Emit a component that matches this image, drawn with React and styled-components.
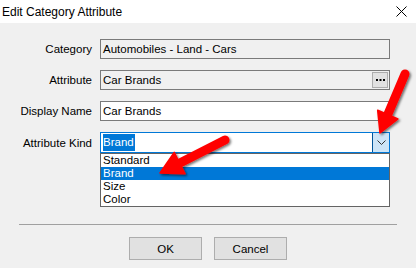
import * as React from "react"
import styled, { createGlobalStyle } from "styled-components"

const GlobalStyle = createGlobalStyle`
    html, body {
        margin: 0;
        padding: 0;
        background: #f0f0f0;
    }
    body {
        font-family: "Liberation Sans", Arial, sans-serif;
        font-size: 11.5px;
        color: #000;
    }
`

const Window = styled.div`
    position: relative;
    width: 416px;
    height: 268px;
    background: #f0f0f0;
    overflow: hidden;
`

const TitleBar = styled.div`
    height: 23px;
    background: #fff;
    display: flex;
    align-items: center;
    justify-content: space-between;
    padding: 0 8px 0 2px;
    font-size: 12px;
`

const CloseIcon = styled.svg`
    width: 11px;
    height: 11px;
    margin-right: 1px;
`

const Form = styled.div`
    display: grid;
    grid-template-columns: 92px 290px;
    column-gap: 8px;
    row-gap: 11px;
    padding-top: 16px;
    align-items: center;
`

const Label = styled.div`
    text-align: right;
    white-space: nowrap;
    line-height: 14px;
`

const Field = styled.div`
    position: relative;
    height: ${p => (p.$focus ? 21 : 20)}px;
    box-sizing: border-box;
    border: 1px solid ${p => (p.$focus ? "#0078d7" : "#7a7a7a")};
    background: ${p => (p.$readOnly ? "#f0f0f0" : "#fff")};
    display: flex;
    align-items: center;
    padding-left: 2px;
`

const FieldText = styled.span`
    flex: 1;
    line-height: 16px;
    white-space: nowrap;
`

const Selected = styled.span`
    display: inline-block;
    background: #0078d7;
    color: #fff;
    line-height: 17px;
    padding: 0 1px 0 0;
`

const DotsButton = styled.div`
    width: 14px;
    height: 14px;
    margin-right: 1px;
    border: 1px solid #adadad;
    background: #e1e1e1;
    display: flex;
    align-items: center;
    justify-content: center;
`

const DropButton = styled.div`
    width: 16px;
    align-self: stretch;
    border-left: 1px solid #005499;
    background: #cce4f7;
    display: flex;
    align-items: center;
    justify-content: center;
`

const List = styled.div`
    position: absolute;
    left: -1px;
    right: -1px;
    top: 20px;
    border: 1px solid #646464;
    background: #fff;
    z-index: 2;
`

const Item = styled.div`
    height: 13px;
    line-height: 13px;
    padding-left: 2px;
    overflow: hidden;
    background: ${p => (p.$active ? "#0078d7" : "transparent")};
    color: ${p => (p.$active ? "#fff" : "#000")};
`

const Separator = styled.div`
    margin: 71px 19px 0 19px;
    height: 1px;
    background: #a0a0a0;
`

const Buttons = styled.div`
    display: flex;
    justify-content: center;
    gap: 12px;
    margin-top: 12px;
`

const Button = styled.div`
    width: 73px;
    height: 23px;
    box-sizing: border-box;
    border: 1px solid #adadad;
    background: #e1e1e1;
    display: flex;
    align-items: center;
    justify-content: center;
`

const Overlay = styled.svg`
    position: absolute;
    left: 0;
    top: 0;
    pointer-events: none;
    z-index: 5;
`

const kinds = ["Standard", "Brand", "Size", "Color"]

const Arrow = ({ tail, tip, len, half }) => {
    const dx = tip[0] - tail[0]
    const dy = tip[1] - tail[1]
    const d = Math.hypot(dx, dy)
    const ux = dx / d
    const uy = dy / d
    const bx = tip[0] - ux * len
    const by = tip[1] - uy * len
    const px = -uy
    const py = ux
    const pts = [
        tip,
        [bx + px * half, by + py * half],
        [bx - px * half, by - py * half],
    ].map(p => p.join(",")).join(" ")
    return (
        <g>
            <line x1={tail[0]} y1={tail[1]} x2={bx + ux * 3} y2={by + uy * 3} stroke="#ff0000" strokeWidth="9" strokeLinecap="round" />
            <polygon points={pts} fill="#ff0000" stroke="#ff0000" strokeWidth="1.5" strokeLinejoin="round" />
        </g>
    )
}

const App = () => {
    return (
        <Window>
            <GlobalStyle />
            <TitleBar>
                <span>Edit Category Attribute</span>
                <CloseIcon viewBox="0 0 11 11">
                    <path d="M0.5 0.5 L10.5 10.5 M10.5 0.5 L0.5 10.5" stroke="#000" strokeWidth="1" />
                </CloseIcon>
            </TitleBar>

            <Form>
                <Label>Category</Label>
                <Field $readOnly>
                    <FieldText>Automobiles - Land - Cars</FieldText>
                </Field>

                <Label>Attribute</Label>
                <Field $readOnly>
                    <FieldText>Car Brands</FieldText>
                    <DotsButton>
                        <svg width="9" height="3" viewBox="0 0 9 3">
                            <rect x="0" y="0" width="2" height="2" fill="#000" />
                            <rect x="3.5" y="0" width="2" height="2" fill="#000" />
                            <rect x="7" y="0" width="2" height="2" fill="#000" />
                        </svg>
                    </DotsButton>
                </Field>

                <Label>Display Name</Label>
                <Field>
                    <FieldText>Car Brands</FieldText>
                </Field>

                <Label>Attribute Kind</Label>
                <Field $focus>
                    <FieldText><Selected>Brand</Selected></FieldText>
                    <DropButton>
                        <svg width="9" height="5" viewBox="0 0 9 5">
                            <path d="M0.5 0.5 L4.5 4.5 L8.5 0.5" stroke="#333" strokeWidth="1" fill="none" />
                        </svg>
                    </DropButton>
                    <List>
                        {kinds.map(k => (
                            <Item key={k} $active={k === "Brand"}>{k}</Item>
                        ))}
                    </List>
                </Field>
            </Form>

            <Separator />

            <Buttons>
                <Button>OK</Button>
                <Button>Cancel</Button>
            </Buttons>

            <Overlay width="416" height="268" viewBox="0 0 416 268">
                <defs>
                    <filter id="shadow" x="-20%" y="-20%" width="140%" height="140%">
                        <feDropShadow dx="1.5" dy="1.5" stdDeviation="1.2" floodColor="#000" floodOpacity="0.55" />
                    </filter>
                </defs>
                <g filter="url(#shadow)">
                    <Arrow tail={[405, 74]} tip={[380, 133]} len={20} half={11} />
                    <Arrow tail={[225, 140]} tip={[160, 173]} len={22} half={12} />
                </g>
            </Overlay>
        </Window>
    )
}

export default App
